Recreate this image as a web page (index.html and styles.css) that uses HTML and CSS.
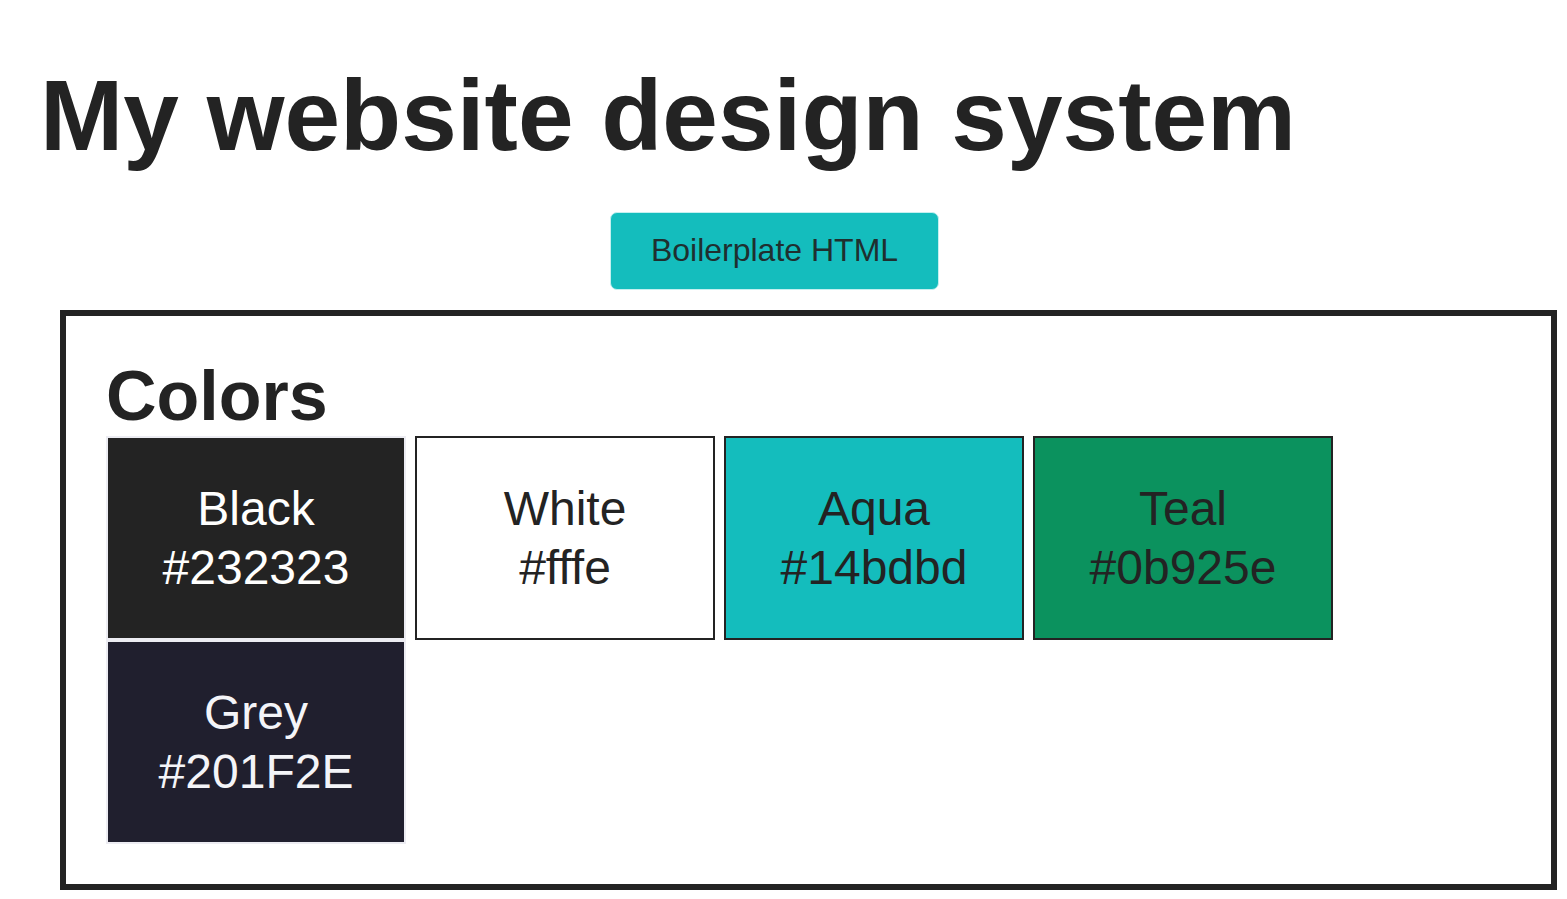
FILE: index.html
```html
<!DOCTYPE html>
<html lang="en">
<head>
<meta charset="utf-8">
<title>My website design system</title>
<link rel="stylesheet" href="styles.css">
</head>
<body>
<div class="page">
  <h1 class="title">My website design system</h1>
  <div class="button-row">
    <a class="btn" href="#">Boilerplate HTML</a>
  </div>
  <section class="panel">
    <h2 class="panel-title">Colors</h2>
    <div class="swatches">
      <div class="swatch swatch-black"><span class="line">Black</span><span class="line">#232323</span></div>
      <div class="swatch swatch-white"><span class="line">White</span><span class="line">#fffe</span></div>
      <div class="swatch swatch-aqua"><span class="line">Aqua</span><span class="line">#14bdbd</span></div>
      <div class="swatch swatch-teal"><span class="line">Teal</span><span class="line">#0b925e</span></div>
      <div class="swatch swatch-grey"><span class="line">Grey</span><span class="line">#201F2E</span></div>
    </div>
  </section>
</div>
</body>
</html>
```
FILE: styles.css
```css
html, body {
  margin: 0;
  padding: 0;
  background: #ffffff;
}

body {
  font-family: "Liberation Sans", Arial, Helvetica, sans-serif;
  color: #232323;
}

.page {
  padding: 58px 10px 0 36px;
}

.title {
  margin: 0;
  padding-left: 4px;
  font-size: 100px;
  font-weight: 700;
  line-height: 115px;
  color: #232323;
}

.button-row {
  display: flex;
  justify-content: center;
  padding-right: 44px;
  margin-top: 39px;
}

.btn {
  display: inline-block;
  box-sizing: border-box;
  width: 329px;
  height: 78px;
  padding: 19px 0 0;
  text-align: center;
  font-size: 32px;
  line-height: 37px;
  color: #1f2f2f;
  text-decoration: none;
  background: #14bdbd;
  border: 1px solid #c4f0f0;
  border-radius: 7px;
}

.panel {
  margin: 20px 0 0 24px;
  border: 6px solid #232323;
  padding: 40px;
  box-sizing: border-box;
  width: 1497px;
}

.panel-title {
  margin: 0;
  font-size: 70px;
  font-weight: 700;
  line-height: 80px;
  color: #232323;
}

.swatches {
  display: flex;
  flex-wrap: wrap;
  column-gap: 9px;
  row-gap: 0;
}

.swatch {
  box-sizing: border-box;
  width: 300px;
  height: 204px;
  padding: 41px 0;
  border: 2px solid #232323;
  display: flex;
  flex-direction: column;
  align-items: center;
  font-size: 48px;
  line-height: 59px;
}

.line {
  display: block;
}

.swatch-black {
  background: #232323;
  color: #fffffe;
  border-color: #ececf2;
}

.swatch-white {
  background: #ffffff;
  color: #232323;
}

.swatch-aqua {
  background: #14bdbd;
  color: #232323;
}

.swatch-teal {
  background: #0b925e;
  color: #232323;
}

.swatch-grey {
  background: #201f2e;
  color: #f4f4f8;
  border-color: #ececf2;
}
```
